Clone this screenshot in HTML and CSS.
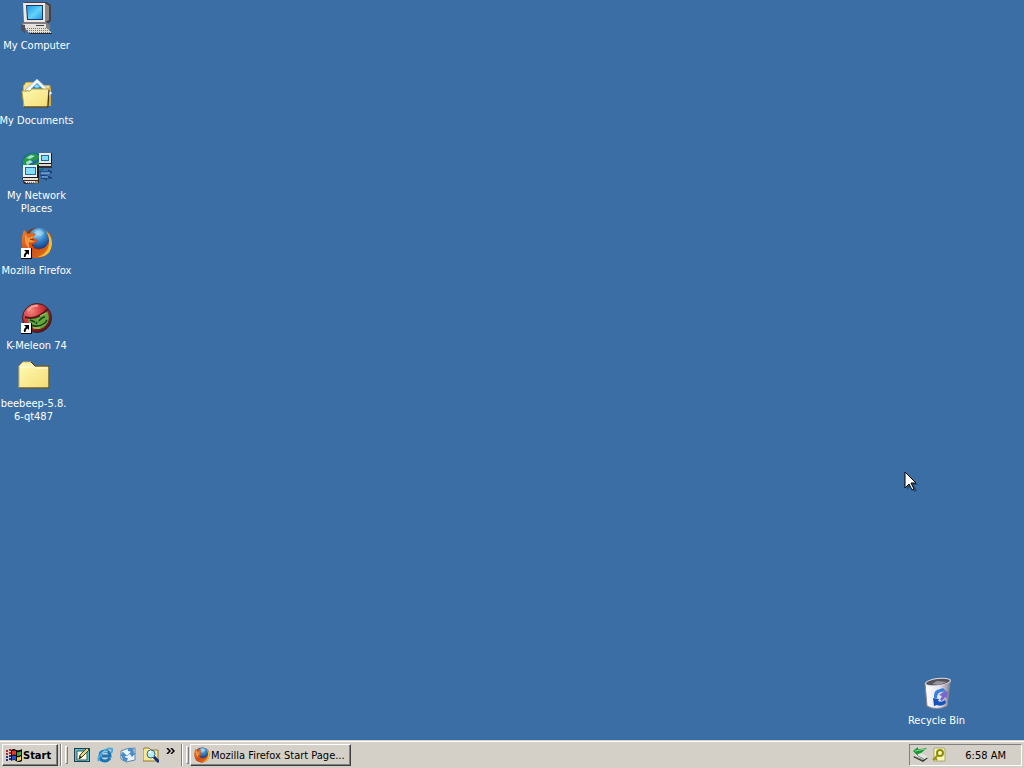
FILE: index.html
```
<!DOCTYPE html>
<html lang="en">
<head>
<meta charset="utf-8">
<title>Desktop</title>
<link rel="stylesheet" href="styles.css">
</head>
<body>
<svg class="defs" aria-hidden="true">
  <defs>
    <linearGradient id="screen" x1="0" y1="0" x2="1" y2="1"><stop offset="0" stop-color="#1c9be4"/><stop offset=".55" stop-color="#64d2fa"/><stop offset="1" stop-color="#1e9ee6"/></linearGradient>
    <linearGradient id="folder" x1="0" y1="0" x2="1" y2="1"><stop offset="0" stop-color="#fffbb4"/><stop offset="1" stop-color="#f5dc74"/></linearGradient>
    <radialGradient id="globe" cx=".45" cy=".25" r=".7"><stop offset="0" stop-color="#a4dcf8"/><stop offset=".45" stop-color="#3a8cd0"/><stop offset="1" stop-color="#123c84"/></radialGradient>
    <linearGradient id="fox" x1="0" y1="0" x2="1" y2="1"><stop offset="0" stop-color="#e8822c"/><stop offset=".5" stop-color="#d04c18"/><stop offset="1" stop-color="#e07a1c"/></linearGradient>
    <linearGradient id="bin" x1="0" y1="0" x2="1" y2="0"><stop offset="0" stop-color="#fff"/><stop offset=".6" stop-color="#e4e2ec"/><stop offset="1" stop-color="#85808f"/></linearGradient>
    <radialGradient id="red" cx=".3" cy=".25" r=".8"><stop offset="0" stop-color="#f4847c"/><stop offset=".5" stop-color="#cc3038"/><stop offset="1" stop-color="#601018"/></radialGradient>
    <pattern id="keys" width="2" height="2" patternUnits="userSpaceOnUse"><rect width="2" height="2" fill="#e6e1d7"/><rect width="1" height="1" fill="#77726a"/></pattern>
    <symbol id="shortcut" viewBox="0 0 11 11"><path d="M0 0h11v11H0z" fill="#000"/><path d="M0 0h10v10H0z" fill="#fff"/><path d="M3 2h5v5L6.600 5.600Q4.500 6.500 4.500 9H3Q2.200 6 5 4z" fill="#000"/></symbol>
    <symbol id="firefox" viewBox="0 0 32 32">
      <circle cx="16" cy="16" r="15" fill="#8c3410"/>
      <circle cx="18" cy="12" r="11" fill="url(#globe)"/>
      <path d="M15 4q5-2 8 2l-3 3-4-1-2 3-3-2z" fill="#a8dcf4" opacity=".6"/>
      <path d="M3 3l4 4q4-2 8 0l-3 4 5 2q-2 4-6 4 1 5 8 5 7-1 9-8 1-6-3-11 6 4 6 12-1 15-15 16Q2 31 1 18 0 9 3 3z" fill="url(#fox)"/>
      <path d="M25 4q6 5 6 13-1 13-14 13 10-4 11-13 1-7-3-13z" fill="#f8bc30"/>
      <path d="M4 7l3 4q4-2 6-2l-3 4 4 1q-3 2-6 1-1 4 2 8-6-4-6-10z" fill="#f09a40"/>
      <path d="M9 12l4 1M11 17q1 5 8 5" fill="none" stroke="#7c2c10"/>
    </symbol>
    <symbol id="pc" viewBox="0 0 32 32">
      <path d="M2 2l2-2h22l4 3v16l-4 3H4z" fill="#42424a"/>
      <path d="M2 1h22v19H3z" fill="#eeeae2"/><path d="M24 1l4 3v14l-4 2z" fill="#8c8988"/>
      <path d="M5 3h17v15H6z" fill="#15356c"/><path d="M6 4h15v13H7z" fill="url(#screen)"/>
      <path d="M1 21l4-1h20l4 3v5H1z" fill="#807d80"/><path d="M1 22h24v4H1z" fill="#e5e1dc"/><path d="M15 23h8v1h-8z" fill="#3c3a42"/>
      <path d="M4 26h22l5 5H8z" fill="url(#keys)"/><path d="M8 31h23v1H9z" fill="#252733"/><path d="M0 22v6l4 3V23z" fill="#4c5060"/>
    </symbol>
  </defs>
</svg>
<main class="desktop">
  <div class="column">
    <button class="shortcut"><svg class="icon" viewBox="0 0 32 32"><use href="#pc"/></svg><span>My Computer</span></button>
    <button class="shortcut"><svg class="icon" viewBox="0 0 32 32">
      <path d="M2 29V9l3-4h7l3 3h14l1 4v17z" fill="#d9ad3c"/>
      <path d="M3 9l2-3h6l3 3h14v5H3z" fill="#f5df82"/>
      <path d="M4 13L16 2l15 14-5 6z" fill="#f4faff" stroke="#9ab8da"/>
      <path d="M10 12l6-6 6 6-6 5z" fill="#2581c7"/><path d="M13 9l3-2 3 3-4 1z" fill="#8bdcf4"/><path d="M23 13l5 4-3 3z" fill="#6fa9d7"/>
      <path d="M1 14h8l2-2h17l-2 18H3z" fill="url(#folder)" stroke="#c29b3e"/><path d="M3 30h24l1-17" fill="none" stroke="#322f24"/>
    </svg><span>My Documents</span></button>
    <button class="shortcut"><svg class="icon" viewBox="0 0 32 32">
      <circle cx="12" cy="12" r="11.500" fill="#1c6a98"/><path d="M2 8Q8 0 15 2l4 3-5 4-3-1-4 6-5-1zM13 12l6-3 3 6-7 5-5-2zM2 14l3 1v5z" fill="#289747"/><path d="M5 6l5-3 4 1-5 3zM5 10l4-2 3 2-6 3z" fill="#a0e5cb"/>
      <path d="M18 1h13v12H18z" fill="#111c32"/><path d="M18 1h12v10H18z" fill="#ece8dd"/><path d="M20 3h8v6h-8z" fill="#146fae"/><path d="M21 4h6v4h-6z" fill="#86dafa"/><path d="M18 12h13v4H18z" fill="#312e36"/><path d="M18 12h12v2H18z" fill="#ded8cb"/>
      <path d="M2 13h16v13H2z" fill="#151b2e"/><path d="M2 13h14v12H2z" fill="#f3efe5"/><path d="M4 15h11v8H4z" fill="#116fb4"/><path d="M5 16h9v6H5z" fill="#83ddfb"/>
      <path d="M1 26h17v5l-15 1z" fill="#332b27"/><path d="M2 26h15v2H2z" fill="#e9e1d0"/><path d="M3 29h14v2H5z" fill="url(#keys)"/><path d="M14 29h3v2h-3z" fill="#d4922e"/>
      <path d="M19 20h12l-4-2M31 20l-3 2M19 23l7 1M20 26h11l-5-2M22 26l4 2" fill="none" stroke="#15346f"/><path d="M20 21h9M21 25h6" stroke="#8fc4ed"/>
    </svg><span>My Network<br>Places</span></button>
    <button class="shortcut"><svg class="icon" viewBox="0 0 32 32"><use href="#firefox"/><use href="#shortcut" y="21" width="11" height="11"/></svg><span>Mozilla Firefox</span></button>
    <button class="shortcut"><svg class="icon" viewBox="0 0 32 32">
      <circle cx="16" cy="16" r="14.500" fill="url(#red)" stroke="#352324"/><path d="M6 15q9 2 20-6 3 6 1 11-4 8-12 7-6-1-9-12z" fill="#65a83e"/><path d="M4 15q11 4 23-8" fill="none" stroke="#58151b" stroke-width="2"/><path d="M9 18l5 2M18 19q3-4 6-4M10 23q7 3 14-2l2-3M16 20l-1 2" fill="none" stroke="#183e1c" stroke-width="1.500"/><path d="M19 14l6-3M12 26l7 0" stroke="#b3d364"/><path d="M7 9q4-6 10-5" fill="none" stroke="#f4a09b" stroke-width="2"/>
      <use href="#shortcut" y="21" width="11" height="11"/>
    </svg><span>K-Meleon 74</span></button>
  </div>
  <button class="shortcut folder"><svg class="icon" viewBox="0 0 32 32"><path d="M1 6l4-4h8l4 4h14v22H1z" fill="url(#folder)" stroke="#d0b55b"/><path d="M13 2l4 4h14v22H1" fill="none" stroke="#38331f"/><path d="M2 7h14l2 1h11" fill="none" stroke="#fffde1"/></svg><span>beebeep-5.8.<br>6-qt487</span></button>
  <button class="shortcut recycle"><svg class="icon" viewBox="0 0 32 32">
    <path d="M4 6l2 23q9 5 20 0l3-24z" fill="url(#bin)" stroke="#8b8795"/><ellipse cx="17" cy="5" rx="12.500" ry="3.500" transform="rotate(-7 17 5)" fill="#55515a" stroke="#dedae6"/><path d="M11 7l5-3 10 1-8 3z" fill="#99959c"/>
    <path d="M13 21q-1-8 6-9l3-1 3 3-5 1q-4 1-4 6z" fill="#397fdd"/><path d="M18 18l6-4 3 1-1 6-2-1-3 4-2-1 2-4z" fill="#7866cf"/><path d="M12 21l6 1-1 2q4 2 7-1l1 3q-4 4-9 2l-3 1z" fill="#1752be"/>
  </svg><span>Recycle Bin</span></button>
  <svg class="cursor" viewBox="0 0 14 22" aria-hidden="true"><path d="M3 4v15l4-4 3 6 3-1-3-6h4z" fill="#1c3b60" opacity=".6"/><path d="M1 1v16l4-4 3 6 2-1-3-6h5z" fill="#fff" stroke="#000"/></svg>
</main>
<footer class="taskbar">
  <button class="raised start"><svg class="small" viewBox="0 0 16 16">
    <path d="M5 3q3-2 5 0 3 1 6-1v12q-3 2-6 0-2-2-5 0z" fill="#080808"/><path d="M6 4q2-1 4 0v4Q8 7 6 8z" fill="#e93b26"/><path d="M11 5q2 1 4-1v4q-2 1-4 1z" fill="#45ab37"/><path d="M6 9q2-1 4 0v4q-2-1-4 0z" fill="#2852cf"/><path d="M11 10q2 1 4-1v4q-2 1-4 1z" fill="#f4d832"/>
    <path d="M0 4h2M3 3h2M0 7h2M3 6h2" stroke="#b32822" stroke-width="2"/><path d="M0 10h2M3 9h2M0 13h2M3 12h2" stroke="#20387f" stroke-width="2"/>
  </svg>Start</button>
  <span class="rule"></span><span class="grip"></span>
  <nav class="quick" aria-label="Quick Launch">
    <button aria-label="Show Desktop"><svg class="small" viewBox="0 0 16 16"><path d="M0 1h16v14H0z" fill="#253d4b"/><path d="M1 2h14v12H1z" fill="#58bdcc"/><path d="M3 4h10v9H3z" fill="#fffbe4" stroke="#315f68"/><path d="M5 12l1-4 7-7 2 2-7 7z" fill="#f2d46f" stroke="#334c3d"/><path d="M5 12l1-3 2 1z" fill="#222"/></svg></button>
    <button aria-label="Internet Explorer"><svg class="small" viewBox="0 0 16 16"><path d="M13 11q-2 3-5 3-5 0-5-5t5-5q5 0 5 5H5" fill="none" stroke="#1875b8" stroke-width="3"/><path d="M2 14Q0 12 5 6q6-6 10-4 1 1-1 4" fill="none" stroke="#4ba8dd" stroke-width="2"/><path d="M5 6q3-3 6-1" fill="none" stroke="#8ed4f4"/></svg></button>
    <button aria-label="Outlook Express"><svg class="small" viewBox="0 0 16 16"><path d="M1 4l5-2 9-1v12L6 15l-5-3z" fill="#e9f5fc" stroke="#5c83ab"/><path d="M2 5l5 4 7-7" fill="none" stroke="#8ab1d2"/><path d="M8 1q6-1 6 5h2l-4 4-3-4h2q0-2-3-2zM7 14q-5 1-5-5H0l3-4 4 4H5q0 2 3 2z" fill="#4b8cc9"/></svg></button>
    <button aria-label="Search"><svg class="small" viewBox="0 0 16 16"><path d="M0 3l1-2h5l2 2h7v11H0z" fill="#f6e794" stroke="#8e7b32"/><circle cx="8" cy="7" r="4" fill="#b6eaf5" stroke="#366b8b"/><path d="M11 10l5 5" stroke="#142e7a" stroke-width="3"/><path d="M6 6l2-2" stroke="#fff" stroke-width="2"/></svg></button>
    <button class="more" aria-label="More"><svg class="chevron" viewBox="0 0 9 6"><path d="M1 0l3 3-3 3M5 0l3 3-3 3" fill="none" stroke="#000" stroke-width="1.500"/></svg></button>
  </nav>
  <span class="rule"></span><span class="grip"></span>
  <button class="raised task"><svg class="small" viewBox="0 0 32 32"><use href="#firefox"/></svg>Mozilla Firefox Start Page...</button>
  <div class="tray">
    <svg class="small" viewBox="0 0 16 16"><path d="M0 10l6-3 9 4-5 4z" fill="#303830"/><path d="M1 9l6-3 8 4-5 3z" fill="#e4e6df"/><path d="M3 10l7 3M5 9l6 3" stroke="#85908a"/><path d="M0 4l5-4v2h2l7-1-6 5-3 1v2z" fill="#159735"/><path d="M2 4l5-1 5-1" stroke="#92dc8b"/></svg>
    <svg class="small" viewBox="0 0 16 16"><path d="M3 1h10l1 1v12H3z" fill="#faf6b8" stroke="#aaa778"/><circle cx="9" cy="6" r="3" fill="none" stroke="#8c8c0a" stroke-width="2"/><path d="M7 8l-5 5M4 11l2 2" stroke="#98930d" stroke-width="2"/></svg>
    <time>6:58 AM</time>
  </div>
</footer>
</body>
</html>
```
FILE: styles.css
```
* { box-sizing: border-box; }
body {
  margin: 0;
  min-height: 100vh;
  display: flex;
  flex-direction: column;
  background: #3a6ea5;
  font: 11px/13px Tahoma, "DejaVu Sans Condensed", "DejaVu Sans", sans-serif;
  color: #000;
}
button {
  font: inherit;
  color: inherit;
  border: 0;
  padding: 0;
  background: none;
}
.defs { position: absolute; width: 0; height: 0; }
.desktop { position: relative; flex: 1; overflow: hidden; }
.column {
  display: grid;
  grid-auto-rows: 75px;
  width: 73px;
}
.shortcut {
  display: flex;
  flex-direction: column;
  align-items: center;
  gap: 5px;
  width: 73px;
  padding-top: 2px;
  color: #fff;
  white-space: nowrap;
}
.icon { width: 32px; height: 32px; flex: none; }
.folder { position: absolute; left: -3px; top: 358px; }
.recycle { position: absolute; right: 51px; bottom: 13px; }
.cursor { position: absolute; left: 904px; top: 471px; width: 14px; height: 22px; }

.taskbar {
  display: flex;
  align-items: center;
  height: 28px;
  padding: 2px 2px 1px;
  background: #d4d0c8;
  border-top: 1px solid #d4d0c8;
  box-shadow: inset 0 1px #fff;
}
.small { width: 16px; height: 16px; flex: none; }
.raised {
  display: flex;
  align-items: center;
  height: 22px;
  border: 1px solid;
  border-color: #fff #404040 #404040 #fff;
  box-shadow: inset -1px -1px #808080;
}
.start { width: 56px; padding-left: 3px; gap: 1px; font-weight: bold; }
.rule {
  width: 2px;
  height: 22px;
  margin-left: 2px;
  background: #808080;
  border-right: 1px solid #fff;
}
.grip {
  width: 3px;
  height: 18px;
  margin-left: 3px;
  border: 1px solid;
  border-color: #fff #808080 #808080 #fff;
}
.quick { display: flex; align-items: center; gap: 7px; width: 111px; padding-left: 6px; }
.quick button { display: flex; }
.more { align-self: flex-start; padding-top: 1px; }
.chevron { width: 9px; height: 6px; }
.task { width: 161px; margin-left: 1px; padding-left: 3px; gap: 1px; white-space: nowrap; }
.tray {
  display: flex;
  align-items: center;
  gap: 2px;
  height: 22px;
  margin-left: auto;
  padding: 0 15px 0 3px;
  border: 1px solid;
  border-color: #808080 #fff #fff #808080;
}
time { margin-left: 16px; }
```
